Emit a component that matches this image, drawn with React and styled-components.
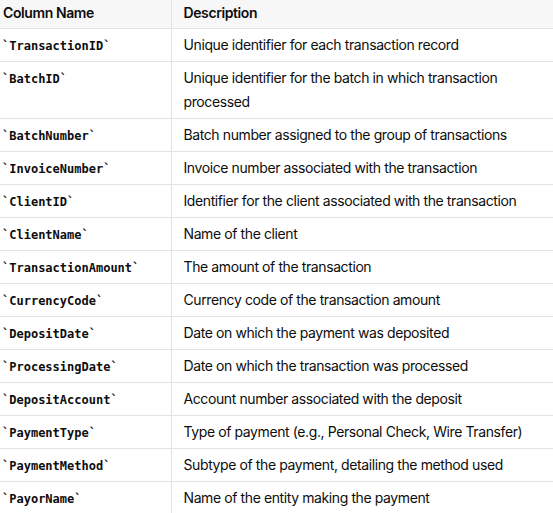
import React from "react";
import styled, { createGlobalStyle } from "styled-components";

const Global = createGlobalStyle`
  html, body { margin: 0; padding: 0; background: #ffffff; }
  body { overflow: hidden; font-family: Inter, "Noto Sans", sans-serif; color: #0d0d0d; }
`;

const Table = styled.table`
  border-collapse: collapse;
  table-layout: fixed;
  width: 556px;
  font-size: 14px;
  line-height: 24px;
  letter-spacing: -0.4px;
`;

const HeadCell = styled.th`
  background: #f7f7f8;
  font-weight: 600;
  text-align: left;
  height: 28px;
  padding: 1px 12px 3px ${(p) => (p.$first ? "3px" : "12px")};
  border-bottom: 1px solid #e3e3e3;
  border-right: ${(p) => (p.$first ? "1px solid #e3e3e3" : "none")};
  box-sizing: border-box;
`;

const Cell = styled.td`
  padding: 4px 12px 4px ${(p) => (p.$first ? "2px" : "12px")};
  border-bottom: 1px solid #e3e3e3;
  border-right: ${(p) => (p.$first ? "1px solid #e3e3e3" : "none")};
  vertical-align: top;
  font-weight: 400;
`;

const Code = styled.code`
  font-family: "DejaVu Sans Mono", "Liberation Mono", monospace;
  font-weight: 700;
  font-size: 12px;
  line-height: 16px;
  letter-spacing: 0;
  color: #0d0d0d;
`;

const rows = [
  ["TransactionID", "Unique identifier for each transaction record"],
  ["BatchID", "Unique identifier for the batch in which transaction processed"],
  ["BatchNumber", "Batch number assigned to the group of transactions"],
  ["InvoiceNumber", "Invoice number associated with the transaction"],
  ["ClientID", "Identifier for the client associated with the transaction"],
  ["ClientName", "Name of the client"],
  ["TransactionAmount", "The amount of the transaction"],
  ["CurrencyCode", "Currency code of the transaction amount"],
  ["DepositDate", "Date on which the payment was deposited"],
  ["ProcessingDate", "Date on which the transaction was processed"],
  ["DepositAccount", "Account number associated with the deposit"],
  ["PaymentType", "Type of payment (e.g., Personal Check, Wire Transfer)"],
  ["PaymentMethod", "Subtype of the payment, detailing the method used"],
  ["PayorName", "Name of the entity making the payment"],
];

export default function App() {
  return (
    <>
      <Global />
      <Table>
        <colgroup>
          <col style={{ width: 171 }} />
          <col />
        </colgroup>
        <thead>
          <tr>
            <HeadCell $first>Column Name</HeadCell>
            <HeadCell>Description</HeadCell>
          </tr>
        </thead>
        <tbody>
          {rows.map(([name, desc]) => (
            <tr key={name}>
              <Cell $first>
                <Code>`{name}`</Code>
              </Cell>
              <Cell>{desc}</Cell>
            </tr>
          ))}
        </tbody>
      </Table>
    </>
  );
}
